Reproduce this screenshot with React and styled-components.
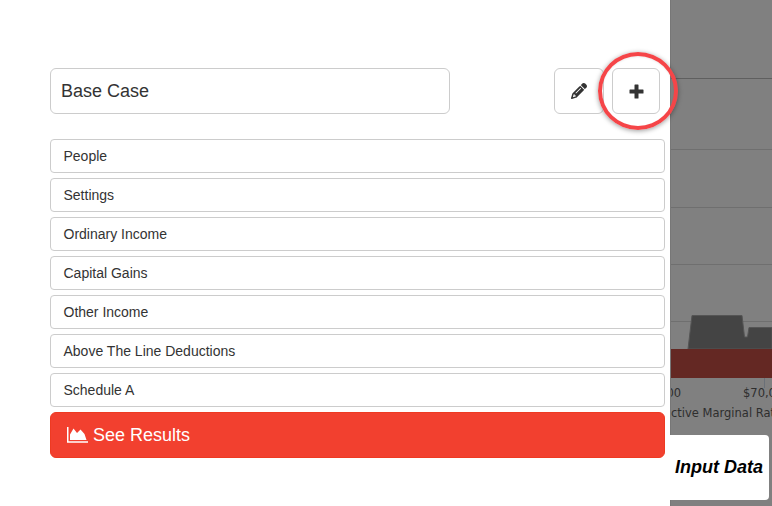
import React from "react";
import styled, { createGlobalStyle } from "styled-components";
import { FaPencil } from "react-icons/fa6";

const Global = createGlobalStyle`
  html, body { margin: 0; padding: 0; background: #fff; }
  body { font-family: "Liberation Sans", Arial, sans-serif; color: #333; }
  * { box-sizing: border-box; }
`;

const Page = styled.div`
  position: relative;
  width: 772px;
  height: 506px;
  display: flex;
  overflow: hidden;
`;

const Drawer = styled.aside`
  width: 670px;
  flex: none;
  background: #fff;
  padding: 68px 5px 0 50px;
`;

const Toolbar = styled.div`
  display: flex;
  align-items: stretch;
  height: 46px;
  margin-bottom: 25px;
`;

const NameInput = styled.input`
  width: 400px;
  height: 46px;
  border: 1px solid #ccc;
  border-radius: 6px;
  padding: 0 10px;
  font: 18px "Liberation Sans", Arial, sans-serif;
  color: #333;
  background: #fff;
  outline: none;
`;

const IconButton = styled.button`
  width: ${(p) => p.$w}px;
  height: 46px;
  margin-left: ${(p) => p.$ml}px;
  background: #fff;
  border: 1px solid #ccc;
  border-radius: 6px;
  color: #333;
  display: flex;
  align-items: center;
  justify-content: center;
  padding: 0;
  font-size: ${(p) => p.$size}px;
`;

const List = styled.div`
  display: flex;
  flex-direction: column;
  gap: 5px;
`;

const Row = styled.div`
  height: 34px;
  border: 1px solid #ccc;
  border-radius: 4px;
  background: #fff;
  padding: 0 12.5px;
  display: flex;
  align-items: center;
  font-size: 14px;
  color: #333;
`;

const Results = styled.button`
  width: 100%;
  height: 46px;
  background: #f2402f;
  border: 1px solid #ee3a22;
  border-radius: 6px;
  color: #fff;
  font: 18px "Liberation Sans", Arial, sans-serif;
  display: flex;
  align-items: center;
  gap: 5px;
  padding: 0 16px;
`;

const Backdrop = styled.div`
  flex: 1;
  background: #808080;
  border-left: 1px solid #777;
`;

const Chart = styled.svg`
  display: block;
`;

const ChartText = styled.text`
  font-family: "DejaVu Sans", sans-serif;
  font-size: 11.5px;
  fill: #2e2e2e;
`;

const Ring = styled.div`
  position: absolute;
  left: 598px;
  top: 52px;
  width: 80px;
  height: 78px;
  border: 4px solid #f54548;
  border-radius: 50%;
  box-shadow: 0 1px 5px rgba(0, 0, 0, 0.4), inset 0 1px 2px rgba(0, 0, 0, 0.08);
`;

const Tab = styled.div`
  position: absolute;
  left: 670px;
  top: 435px;
  width: 99px;
  height: 65px;
  background: #fff;
  border-radius: 0 4px 4px 0;
  display: flex;
  align-items: center;
  justify-content: flex-end;
  padding: 0 6px 0 0;
  font-size: 18px;
  font-weight: 700;
  font-style: italic;
  color: #000;
`;

const rows = ["People", "Settings", "Ordinary Income", "Capital Gains", "Other Income", "Above The Line Deductions", "Schedule A"];

const PlusIcon = () => (
  <svg width="15" height="15" viewBox="0 0 15 15" fill="currentColor">
    <path d="M6 .5h3a.5.5 0 0 1 .5.5v4.500H14a.5.5 0 0 1 .5.5v3a.5.5 0 0 1-.5.5H9.500V14a.5.5 0 0 1-.5.5H6a.5.5 0 0 1-.5-.5V9.500H1A.5.5 0 0 1 .5 9V6a.5.5 0 0 1 .5-.5h4.500V1A.5.5 0 0 1 6 .5z" />
  </svg>
);

const AreaIcon = () => (
  <svg width="21" height="16" viewBox="0 0 21 16" fill="currentColor">
    <path d="M0 0h1.500v14.200H21v1.500H0z" />
    <path d="M3 13V7.500L6.500 1.500 10 6l3.500-3.500 4 4.500 2 6z" />
  </svg>
);

export default function App() {
  return (
    <Page>
      <Global />
      <Drawer>
        <Toolbar>
          <NameInput defaultValue="Base Case" />
          <IconButton $w={50} $ml={104} $size={16}><FaPencil /></IconButton>
          <IconButton $w={48} $ml={8}><PlusIcon /></IconButton>
        </Toolbar>
        <List>
          {rows.map((r) => <Row key={r}>{r}</Row>)}
          <Results><AreaIcon />See Results</Results>
        </List>
      </Drawer>
      <Backdrop>
        <Chart width="101" height="506" viewBox="0 0 101 506">
          <g stroke="#6f6f6f" strokeWidth="1">
            <path d="M0 78.500H101" stroke="#5f5f5f" />
            <path d="M0 149.500H101M0 207.500H101M0 264.500H101M0 321.500H101" />
          </g>
          <path d="M17 349L21 315.500H71L73.500 337H76.500L78 327.500H101V349Z" fill="#444" stroke="#555" />
          <rect x="0" y="349" width="101" height="29" fill="#642823" />
          <path d="M93.500 378V388" stroke="#6a7078" />
          <ChartText x="-4.500" y="397">00</ChartText>
          <ChartText x="72" y="397">$70,000</ChartText>
          <ChartText x="0" y="417">ctive Marginal Rate</ChartText>
        </Chart>
      </Backdrop>
      <Ring />
      <Tab>Input Data</Tab>
    </Page>
  );
}
